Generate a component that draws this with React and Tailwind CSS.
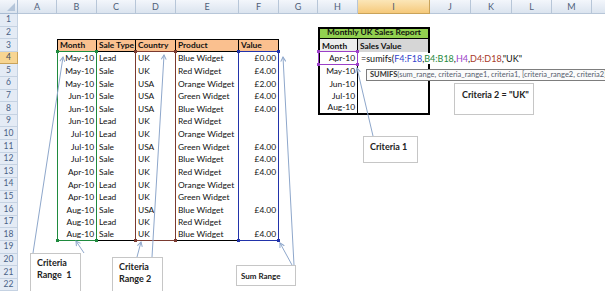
import React from 'react';

const LETTERS = ['A','B','C','D','E','F','G','H','I','J','K','L','M','N'];

const DATA = [
  ['May-10','Lead','UK','Blue Widget','£0.00'],
  ['May-10','Sale','UK','Red Widget','£4.00'],
  ['May-10','Sale','USA','Orange Widget','£2.00'],
  ['Jun-10','Sale','USA','Green Widget','£4.00'],
  ['Jun-10','Sale','USA','Blue Widget','£4.00'],
  ['Jun-10','Lead','UK','Red Widget',''],
  ['Jul-10','Lead','UK','Orange Widget',''],
  ['Jul-10','Sale','USA','Green Widget','£4.00'],
  ['Jul-10','Sale','UK','Blue Widget','£4.00'],
  ['Apr-10','Sale','UK','Red Widget','£4.00'],
  ['Apr-10','Lead','UK','Orange Widget',''],
  ['Apr-10','Lead','UK','Green Widget',''],
  ['Aug-10','Sale','USA','Blue Widget','£4.00'],
  ['Aug-10','Lead','UK','Red Widget',''],
  ['Aug-10','Sale','UK','Blue Widget','£4.00'],
];

const MONTHS = ['Apr-10','May-10','Jun-10','Jul-10','Aug-10'];
const HEAD = { B: 'Month', C: 'Sale Type', D: 'Country', E: 'Product', F: 'Value' };

function cellFor(r, L) {
  if (r === 3 && HEAD[L]) {
    return {
      text: HEAD[L],
      cls: 'bg-[#fac08f] border-y border-r border-black font-bold' + (L === 'B' ? ' border-l' : ''),
    };
  }
  if (r >= 4 && r <= 18 && 'BCDEF'.includes(L)) {
    const i = 'BCDEF'.indexOf(L);
    return {
      text: DATA[r - 4][i],
      right: L === 'B' || L === 'F',
      cls: 'border-r border-black' + (L === 'B' ? ' border-l' : '') + (r === 18 ? ' border-b' : ''),
    };
  }
  if (r === 2 && L === 'H') {
    return {
      text: 'Monthly UK Sales Report',
      center: true,
      cls: 'col-span-2 bg-[#92d050] border-t-2 border-x-2 border-b border-black font-bold',
    };
  }
  if (r === 2 && L === 'I') return null;
  if (r === 3 && L === 'H') {
    return { text: 'Month', cls: 'bg-[#ededed] border-l-2 border-r border-black font-bold' };
  }
  if (r === 3 && L === 'I') {
    return { text: 'Sales Value', cls: 'bg-[#d6d6d6] border-r-2 border-black font-bold' };
  }
  if (r >= 4 && r <= 8 && L === 'H') {
    return {
      text: MONTHS[r - 4],
      right: true,
      cls: 'border-l-2 border-r border-black' + (r === 8 ? ' border-b-2' : ''),
    };
  }
  if (r >= 4 && r <= 8 && L === 'I') {
    return { text: '', cls: 'border-r-2 border-black' + (r === 8 ? ' border-b-2' : '') };
  }
  return { text: '', cls: '' };
}

function Handles({ color, pts }) {
  return pts.map(([x, y], i) => (
    <div
      key={i}
      className={`absolute w-[3px] h-[3px] ${color}`}
      style={{ left: x - 1, top: y - 1 }}
    />
  ));
}

function Callout({ cls, children }) {
  return (
    <div className={'absolute bg-white border border-[#c6c6c6] font-bold text-[#222] ' + cls}>
      {children}
    </div>
  );
}

export default function App() {
  const rows = [];
  rows.push(
    <div
      key="corner"
      className="relative bg-gradient-to-b from-[#f3f6fb] to-[#dbe4ef] border-r border-b border-[#a9bcd3]"
    >
      <svg className="absolute right-[2px] bottom-[2px]" width="8" height="8" viewBox="0 0 8 8">
        <polygon points="8,0 8,8 0,8" fill="#b4c5da" />
      </svg>
    </div>
  );
  LETTERS.forEach((L) => {
    rows.push(
      <div
        key={'h' + L}
        className={
          L === 'I'
            ? 'flex items-center justify-center bg-gradient-to-b from-[#fbe6b8] to-[#f5c97a] border-r border-b border-[#c9a35a] text-[9px] text-[#4a5a70]'
            : 'flex items-center justify-center bg-gradient-to-b from-[#f3f6fb] to-[#dbe4ef] border-r border-b border-[#b7c6d8] text-[9px] text-[#4f6079]'
        }
      >
        {L}
      </div>
    );
  });
  for (let r = 1; r <= 22; r++) {
    rows.push(
      <div
        key={'r' + r}
        className={
          r === 4
            ? 'flex items-center justify-center bg-[#f7d592] border-r border-b border-[#c9a35a] text-[8.5px] text-[#3d4a5c]'
            : 'flex items-center justify-center bg-[#e4ebf5] border-r border-b border-[#c5d2e2] text-[8.5px] text-[#4a6286]'
        }
      >
        {r}
      </div>
    );
    LETTERS.forEach((L) => {
      const c = cellFor(r, L);
      if (!c) return;
      rows.push(
        <div
          key={L + r}
          className={
            'flex items-end whitespace-nowrap px-[2px] pb-[1px] text-[8.4px] leading-[10px] text-[#111] ' +
            (c.right ? 'justify-end ' : '') +
            (c.center ? 'justify-center ' : '') +
            c.cls
          }
        >
          {c.text}
        </div>
      );
    });
  }

  return (
    <div
      className="relative w-[605px] h-[291px] overflow-hidden bg-white"
      style={{ fontFamily: 'Lato, "Liberation Sans", sans-serif' }}
    >
      <div className="grid grid-cols-[18px_39px_40px_39px_40px_63px_40px_39px_40px_72px_41px_41px_40px_40px_40px] grid-rows-[14px_repeat(22,12.62px)] w-[632px]">
        {rows}
      </div>

      {/* range highlights */}
      <div className="absolute left-[57px] top-[51px] w-[40px] h-[190px] border border-[#1f8a3e]" />
      <div className="absolute left-[135px] top-[51px] w-[41px] h-[190px] border border-[#7a3a30]" />
      <div className="absolute left-[238px] top-[51px] w-[41px] h-[190px] border border-[#2233aa]" />
      <div className="absolute left-[318px] top-[51px] w-[40px] h-[14px] border border-[#9b3fc8]" />
      <Handles color="bg-[#1f8a3e]" pts={[[57, 51], [96, 51], [57, 240], [96, 240]]} />
      <Handles color="bg-[#7a3a30]" pts={[[135, 51], [175, 51], [135, 240], [175, 240]]} />
      <Handles color="bg-[#2233aa]" pts={[[238, 51], [278, 51], [238, 240], [278, 240]]} />
      <Handles color="bg-[#9b3fc8]" pts={[[318, 51], [357, 51], [318, 64], [357, 64]]} />

      {/* in-cell formula */}
      <div className="absolute left-[359px] top-[53px] h-[11px] pl-[2px] pr-[3px] bg-white flex items-end whitespace-nowrap text-[9px] leading-[10px] text-[#111]">
        <span>=sumifs(</span>
        <span className="text-[#3344cc]">F4:F18</span>
        <span>,</span>
        <span className="text-[#1f8a3e]">B4:B18</span>
        <span>,</span>
        <span className="text-[#9b3fc8]">H4</span>
        <span>,</span>
        <span className="text-[#a83a2a]">D4:D18</span>
        <span>,"UK"</span>
      </div>

      {/* tooltip */}
      <div className="absolute left-[366px] top-[69px] w-[260px] h-[12px] bg-[#fbfbfb] border border-[#7d7d7d] flex items-center px-[3px] whitespace-nowrap text-[7.5px] text-[#56606e]">
        <span className="font-bold text-[#333]">SUMIFS</span>
        <span>(sum_range, criteria_range1, criteria1, [criteria_range2, criteria2], ...)</span>
      </div>

      {/* arrows */}
      <svg className="absolute left-0 top-0 pointer-events-none" width="605" height="291">
        <defs>
          <marker id="ah" markerWidth="6" markerHeight="6" refX="5" refY="3" orient="auto" markerUnits="userSpaceOnUse">
            <path d="M0.5,0.5 L5,3 L0.5,5.5" fill="none" stroke="#8ea7cb" strokeWidth="1" />
          </marker>
        </defs>
        <g stroke="#8ea7cb" strokeWidth="1" fill="none">
          <line x1="33" y1="253" x2="63" y2="57" markerEnd="url(#ah)" />
          <line x1="84" y1="253" x2="76" y2="241" markerEnd="url(#ah)" />
          <line x1="152" y1="257" x2="164" y2="55" markerEnd="url(#ah)" />
          <line x1="137" y1="257" x2="141" y2="242" markerEnd="url(#ah)" />
          <line x1="294" y1="265" x2="283" y2="57" markerEnd="url(#ah)" />
          <line x1="292" y1="265" x2="280" y2="243" markerEnd="url(#ah)" />
          <line x1="373" y1="136" x2="357" y2="68" markerEnd="url(#ah)" />
        </g>
      </svg>

      {/* callouts */}
      <Callout cls="left-[30px] top-[253px] w-[51px] h-[45px] pl-[6px] pt-[3px] text-[9px] leading-[12px] flex flex-col">
        <span>Criteria</span>
        <span>Range&nbsp;&nbsp;1</span>
      </Callout>
      <Callout cls="left-[112px] top-[257px] w-[51px] h-[40px] pl-[6px] pt-[3px] text-[9px] leading-[12px] flex flex-col">
        <span>Criteria</span>
        <span>Range 2</span>
      </Callout>
      <Callout cls="left-[236px] top-[265px] w-[60px] h-[21px] pl-[4px] flex items-center text-[8px]">
        Sum Range
      </Callout>
      <Callout cls="left-[363px] top-[136px] w-[55px] h-[27px] pl-[6px] pt-[4px] text-[9px] leading-[12px]">
        Criteria 1
      </Callout>
      <Callout cls="left-[454px] top-[83px] w-[80px] h-[32px] pl-[7px] pt-[5px] text-[9px] leading-[12px]">
        Criteria 2 = "UK"
      </Callout>
    </div>
  );
}
